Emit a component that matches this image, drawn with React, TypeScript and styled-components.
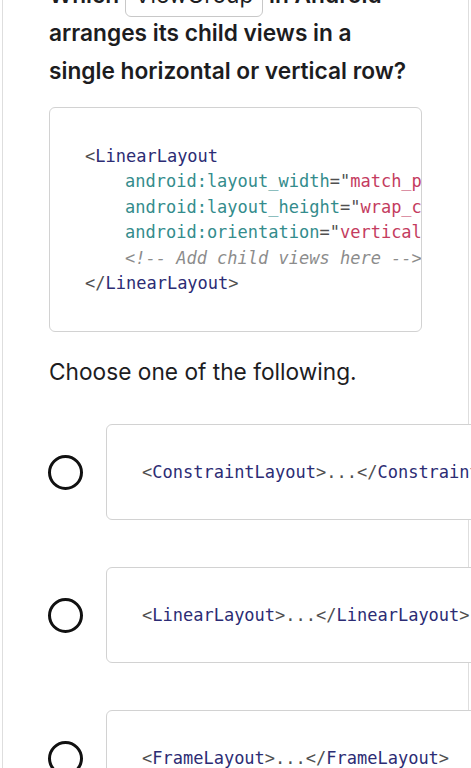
import React from 'react';
import styled, { createGlobalStyle } from 'styled-components';

const GlobalStyle = createGlobalStyle`
  html, body {
    margin: 0;
    padding: 0;
    background: #ffffff;
    overflow: hidden;
  }
  body {
    font-family: Inter, 'Noto Sans', 'Liberation Sans', sans-serif;
    color: #1d1d1f;
  }
`;

const options = [
  { id: 'a', open: 'ConstraintLayout' },
  { id: 'b', open: 'LinearLayout' },
  { id: 'c', open: 'FrameLayout' },
];

const App: React.FC = () => {
  return (
    <Viewport>
      <GlobalStyle />
      <Card>
        <Question>
          Which <InlineCode>ViewGroup</InlineCode> in Android arranges its
          child views in a single horizontal or vertical row?
        </Question>
        <CodeBlock>
          <CodeLine>
            <Punct>&lt;</Punct>
            <Tag>LinearLayout</Tag>
          </CodeLine>
          <CodeLine indent>
            <Attr>android:layout_width</Attr>
            <Punct>="</Punct>
            <Value>match_parent</Value>
            <Punct>"</Punct>
          </CodeLine>
          <CodeLine indent>
            <Attr>android:layout_height</Attr>
            <Punct>="</Punct>
            <Value>wrap_content</Value>
            <Punct>"</Punct>
          </CodeLine>
          <CodeLine indent>
            <Attr>android:orientation</Attr>
            <Punct>="</Punct>
            <Value>vertical</Value>
            <Punct>"&gt;</Punct>
          </CodeLine>
          <CodeLine indent>
            <Comment>&lt;!-- Add child views here --&gt;</Comment>
          </CodeLine>
          <CodeLine>
            <Punct>&lt;/</Punct>
            <Tag>LinearLayout</Tag>
            <Punct>&gt;</Punct>
          </CodeLine>
        </CodeBlock>
        <Prompt>Choose one of the following.</Prompt>
        <OptionList>
          {options.map(o => (
            <OptionRow key={o.id}>
              <Radio />
              <OptionBox>
                <Punct>&lt;</Punct>
                <Tag>{o.open}</Tag>
                <Punct>&gt;...&lt;/</Punct>
                <Tag>{o.open}</Tag>
                <Punct>&gt;</Punct>
              </OptionBox>
            </OptionRow>
          ))}
        </OptionList>
      </Card>
    </Viewport>
  );
};

export default App;

const Viewport = styled.div`
  height: 768px;
  overflow: hidden;
  padding: 0 2px;
`;

// page is scrolled: the first line of the question sits above the fold
const Card = styled.div`
  margin-top: -60px;
  border: 1px solid #dedede;
  border-radius: 8px;
  padding: 35px 46px 40px 46px;
  width: 467px;
  box-sizing: border-box;
`;

const Question = styled.p`
  margin: 0;
  font-size: 22.7px;
  font-weight: 600;
  line-height: 38px;
  color: #1d1d1f;
`;

const InlineCode = styled.span`
  display: inline-block;
  border: 1px solid #c8c8c8;
  border-radius: 6px;
  padding: 0 9px 6px;
  margin-bottom: -6px;
  line-height: 30px;
  font-weight: 400;
`;

const CodeBlock = styled.div`
  margin-top: 17px;
  border: 1px solid #d2d2d2;
  border-radius: 6px;
  padding: 36px 0 35px 35px;
  overflow: hidden;
  font-family: 'DejaVu Sans Mono', 'Liberation Mono', monospace;
  font-size: 17px;
  line-height: 25.4px;
`;

const CodeLine = styled.div<{ indent?: boolean }>`
  white-space: pre;
  padding-left: ${p => (p.indent ? '40px' : '0')};
`;

const Punct = styled.span`
  color: #505050;
`;
const Tag = styled.span`
  color: #2c2c74;
`;
const Attr = styled.span`
  color: #348c8c;
`;
const Value = styled.span`
  color: #c43c60;
`;
const Comment = styled.span`
  color: #8c8c8c;
  font-style: italic;
`;

const Prompt = styled.p`
  margin: 21px 0 0 0;
  font-size: 22.7px;
  font-weight: 400;
  line-height: 38px;
`;

const OptionList = styled.div`
  margin-top: 33px;
  display: flex;
  flex-direction: column;
  gap: 47px;
`;

const OptionRow = styled.div`
  display: flex;
  align-items: center;
  gap: 23px;
`;

const Radio = styled.span`
  flex: none;
  width: 35px;
  height: 35px;
  border: 3px solid #111;
  border-radius: 50%;
  box-sizing: border-box;
  margin-left: -1px;
`;

const OptionBox = styled.div`
  flex: none;
  position: relative;
  height: 96px;
  box-sizing: border-box;
  display: flex;
  align-items: center;
  padding: 0 35px;
  border: 1px solid #d2d2d2;
  border-radius: 6px;
  background: #fff;
  white-space: pre;
  font-family: 'DejaVu Sans Mono', 'Liberation Mono', monospace;
  font-size: 17px;
`;
